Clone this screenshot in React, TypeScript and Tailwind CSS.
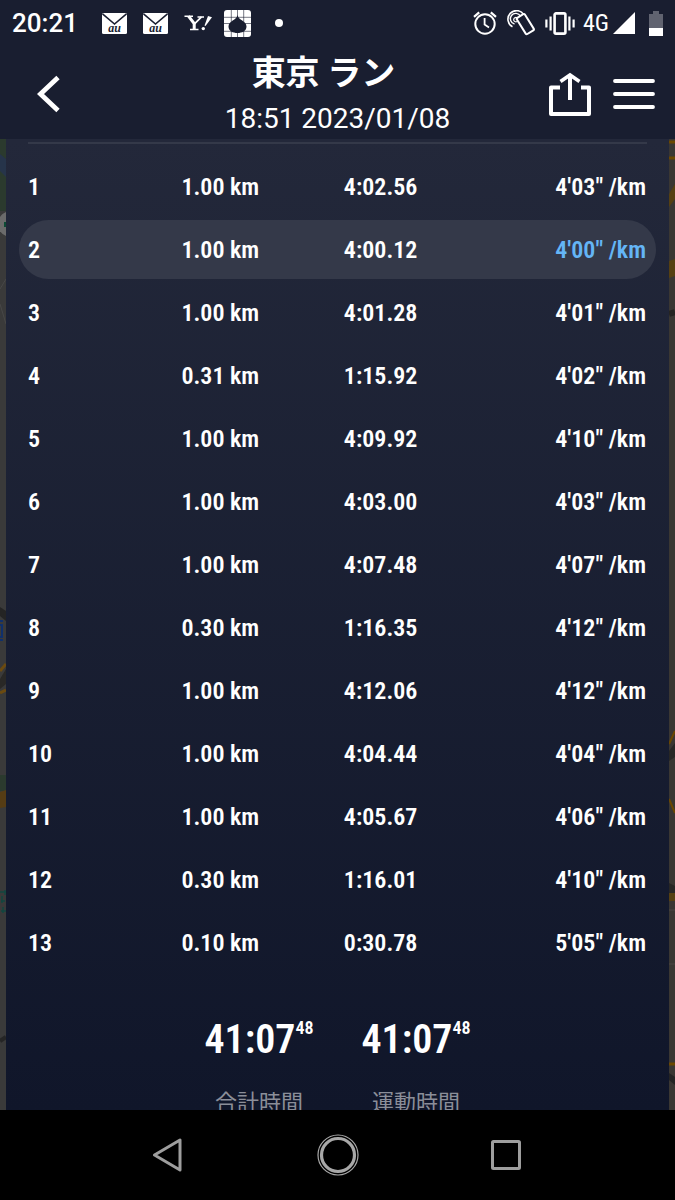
import React from 'react';

interface Lap {
  distance: string;
  time: string;
  pace: string;
}

const laps: Lap[] = [
  { distance: '1.00', time: '4:02.56', pace: `4'03"` },
  { distance: '1.00', time: '4:00.12', pace: `4'00"` },
  { distance: '1.00', time: '4:01.28', pace: `4'01"` },
  { distance: '0.31', time: '1:15.92', pace: `4'02"` },
  { distance: '1.00', time: '4:09.92', pace: `4'10"` },
  { distance: '1.00', time: '4:03.00', pace: `4'03"` },
  { distance: '1.00', time: '4:07.48', pace: `4'07"` },
  { distance: '0.30', time: '1:16.35', pace: `4'12"` },
  { distance: '1.00', time: '4:12.06', pace: `4'12"` },
  { distance: '1.00', time: '4:04.44', pace: `4'04"` },
  { distance: '1.00', time: '4:05.67', pace: `4'06"` },
  { distance: '0.30', time: '1:16.01', pace: `4'10"` },
  { distance: '0.10', time: '0:30.78', pace: `5'05"` },
];

const FASTEST_LAP = 1;

const totals = [
  { label: '合計時間', value: '41:07', fraction: '48' },
  { label: '運動時間', value: '41:07', fraction: '48' },
];

function MailIcon() {
  return (
    <svg width="25" height="21" viewBox="0 0 25 21">
      <rect width="25" height="21" rx="1.5" fill="#fff" />
      <path d="M0.5 0.8 12.5 11 24.5 0.8" fill="none" stroke="#191e30" strokeWidth="1.6" />
      <text x="12.5" y="18.6" textAnchor="middle" fontSize="12" fontWeight="700" fontStyle="italic" fontFamily="Liberation Serif, serif" fill="#191e30">
        au
      </text>
    </svg>
  );
}

function YahooIcon() {
  return (
    <svg width="28" height="18" viewBox="0 0 28 18">
      <g fill="none" stroke="#fff">
        <path d="M0.5 2.2H9M13.5 2.9H20M6 15.6H14.5" strokeWidth="1.5" />
        <path d="M4.5 2.2 10.2 9.6V15.6" strokeWidth="3" />
        <path d="M17.5 2.9 10.5 9.8" strokeWidth="1.7" />
      </g>
      <path d="M24 2 28 3.2 21.5 12 20.5 11.6Z" fill="#fff" />
      <circle cx="19.3" cy="14.6" r="1.7" fill="#fff" />
    </svg>
  );
}

function RainIcon() {
  return (
    <svg width="27" height="27" viewBox="0 0 27 27">
      <rect width="27" height="27" rx="3" fill="#fff" />
      <path d="M7.3 0V27M13.5 0V27M19.7 0V27M0 7.3H27M0 13.5H27M0 21.3H27" stroke="#191e30" strokeWidth="0.6" />
      <path d="M13.5 5C14.2 10.5 22.5 10.5 22.5 16.5C22.5 21 18 23 13.5 23C9 23 4.5 21 4.5 16.5C4.5 10.5 12.8 10.5 13.5 5Z" fill="#191e30" />
    </svg>
  );
}

function AlarmIcon() {
  return (
    <svg width="24" height="24" viewBox="0 0 24 24" fill="none" stroke="#fff">
      <circle cx="12" cy="13" r="9.7" strokeWidth="2" />
      <path d="M11.6 7V13.6L16 16.4" strokeWidth="1.8" />
      <path d="M1 5.8 6.2 1.4M17.8 1.4 23 5.8" strokeWidth="2.2" />
    </svg>
  );
}

function TapIcon() {
  return (
    <svg width="28" height="26" viewBox="0 0 28 26" fill="none" stroke="#fff">
      <path d="M5.5 16.8A8.6 8.6 0 1 1 16.8 4.6" strokeWidth="1.6" />
      <path d="M7.5 14A5.4 5.4 0 1 1 13.5 6.2" strokeWidth="1.4" />
      <path d="M10 11.5A2.2 2.2 0 1 1 10.8 8.5" strokeWidth="1.2" />
      <rect x="13.6" y="4.6" width="9.4" height="19" rx="1.2" transform="rotate(-32 18.3 14.1)" strokeWidth="2" />
    </svg>
  );
}

function VibrateIcon() {
  return (
    <svg width="30" height="23" viewBox="0 0 30 23" fill="none" stroke="#fff">
      <rect x="9.6" y="1.4" width="10.8" height="20.2" rx="1.4" strokeWidth="2.6" />
      <path d="M5.6 4.5V18.5M24.4 4.5V18.5" strokeWidth="2.2" />
      <path d="M1.4 7.5V15.5M28.6 7.5V15.5" strokeWidth="2.2" />
    </svg>
  );
}

function StatusBar() {
  return (
    <div className="flex h-[46px] items-center justify-between px-3">
      <div className="flex items-center">
        <span className="w-[90px] text-[26px] font-medium leading-none">20:21</span>
        <div className="flex items-center gap-4">
          <MailIcon />
          <MailIcon />
          <YahooIcon />
          <div className="-ml-1">
            <RainIcon />
          </div>
        </div>
        <span className="ml-6 size-2 rounded-full bg-white" />
      </div>
      <div className="flex items-center">
        <div className="flex items-center gap-[10px]">
          <AlarmIcon />
          <TapIcon />
          <VibrateIcon />
        </div>
        <span className="ml-2 font-['Roboto_Condensed',sans-serif] text-[24px] leading-none">4G</span>
        <svg className="ml-1" width="22" height="22" viewBox="0 0 22 22">
          <path d="M22 0V22H0Z" fill="#fff" />
        </svg>
        <svg className="ml-[14px]" width="14" height="25" viewBox="0 0 14 25">
          <path d="M4 0H10V3H14V25H0V3H4Z" fill="#606370" />
          <path d="M0 17H14V25H0Z" fill="#fff" />
        </svg>
      </div>
    </div>
  );
}

function Header() {
  return (
    <header className="grid h-[93px] grid-cols-[1fr_auto_1fr] items-center px-5">
      <button type="button" aria-label="戻る" className="justify-self-start pl-4">
        <svg width="26" height="38" viewBox="0 0 26 38">
          <path d="M22 2.5 4.5 19 22 35.5" fill="none" stroke="#fff" strokeWidth="4.8" />
        </svg>
      </button>
      <div className="flex flex-col items-center">
        <h1 className="pr-7 font-['Noto_Sans_CJK_JP',sans-serif] text-[34px] font-bold leading-[50px]">
          東京 ラン
        </h1>
        <p className="text-[28px] leading-[46px]">18:51 2023/01/08</p>
      </div>
      <div className="flex items-center gap-[22px] justify-self-end">
        <button type="button" aria-label="共有">
          <svg width="42" height="44" viewBox="0 0 42 44" fill="none" stroke="#fff" strokeWidth="4">
            <path d="M11 15.5H2V42H40V15.5H32" strokeLinejoin="round" />
            <path d="M21 28V3.5" />
            <path d="M11.5 9.5 21 3 30.5 9.5" strokeWidth="3.6" />
          </svg>
        </button>
        <button type="button" aria-label="メニュー">
          <svg width="42" height="32" viewBox="0 0 42 32" stroke="#fff" strokeWidth="3.8" strokeLinecap="round">
            <path d="M2 3H40M2 16H40M2 29H40" />
          </svg>
        </button>
      </div>
    </header>
  );
}

// Slivers of the dimmed map on both sides of the lap panel
function MapLeft() {
  return (
    <svg className="h-[971px] w-[6px] shrink-0" viewBox="0 0 6 971">
      <rect width="6" height="971" fill="#3a3a3a" />
      <rect width="6" height="72" fill="#2b3a2e" />
      <path d="M0 15 6 20V38L0 32Z" fill="#26344a" />
      <path d="M6 73A13 13 0 0 0 6 97Z" fill="#6b6b6b" />
      <rect x="4" y="83" width="2" height="5" fill="#0d4a35" />
      <path d="M0 150 6 140M0 165 6 185" stroke="#484848" />
      <path d="M0 468 6 472V482L0 477Z" fill="#242424" />
      <path d="M0 482H3M0 486H2V498H0M0 501H3" fill="none" stroke="#10306b" strokeWidth="2" />
      <path d="M0 532 6 525M0 554 6 551" stroke="#6b4a10" strokeWidth="3" />
      <path d="M0 540 6 530V545L0 550Z" fill="#292826" />
      <rect y="636" width="6" height="16" fill="#2b3a2e" />
      <path d="M0 653 6 651V668L0 669Z" fill="#553c14" />
      <path d="M0 753H6M2 757V764M5 751V756M1 762H5M3 768V774M1 772H6" stroke="#124740" strokeWidth="1.5" />
      <path d="M0 902 6 898" stroke="#252525" strokeWidth="4" />
    </svg>
  );
}

function MapRight() {
  return (
    <svg className="h-[971px] w-[6px] shrink-0" viewBox="0 0 6 971">
      <rect width="6" height="971" fill="#3a3733" />
      <path d="M0 3H6M0 19H6" stroke="#6b4700" strokeWidth="3" />
      <path d="M0 55 6 45V60L0 68ZM0 122 6 120V137L0 139Z" fill="#564012" />
      <path d="M0 175 6 173" stroke="#252422" strokeWidth="6" />
      <path d="M0 605 6 592M0 660 6 674" stroke="#6b4700" strokeWidth="2" />
      <path d="M0 612 6 604V618L0 622ZM0 744 6 747V754H0Z" fill="#282725" />
      <rect y="754" width="6" height="8" fill="#564012" />
      <path d="M0 771H6M0 825H6" stroke="#4a4744" />
      <path d="M0 925H6" stroke="#6b4700" strokeWidth="3" />
      <path d="M0 934 6 938V946L0 941Z" fill="#242424" />
    </svg>
  );
}

function LapTable() {
  return (
    <table className="w-full table-fixed border-separate border-spacing-x-0 border-spacing-y-1 text-left text-[24px] font-semibold leading-none">
      <colgroup>
        <col className="w-[25.5%]" />
        <col className="w-[25.5%]" />
        <col className="w-[24%]" />
        <col />
      </colgroup>
      <tbody>
        {laps.map((lap, i) => {
          const fastest = i === FASTEST_LAP;
          return (
            <tr key={i} className={fastest ? '[&>*]:bg-[#343949]' : ''}>
              <th scope="row" className="h-[59px] rounded-l-full p-0 pl-[9px] font-semibold">{i + 1}</th>
              <td className="p-0">{lap.distance} km</td>
              <td className="p-0">{lap.time}</td>
              <td className={`rounded-r-full p-0 pr-[10px] text-right ${fastest ? 'text-[#64b5f6]' : ''}`}>
                {lap.pace} /km
              </td>
            </tr>
          );
        })}
      </tbody>
    </table>
  );
}

function Totals() {
  return (
    <dl className="mt-8 flex justify-center">
      {totals.map((total) => (
        <div key={total.label} className="flex w-[157px] shrink-0 flex-col-reverse items-center">
          <dt className="font-['Noto_Sans_CJK_JP',sans-serif] text-[22px] leading-8 text-[#8b8e99]">
            {total.label}
          </dt>
          <dd className="mb-3 flex items-start font-semibold">
            <span className="text-[40px] leading-[64px]">{total.value}</span>
            <span className="pt-2 text-[18px] leading-6">{total.fraction}</span>
          </dd>
        </div>
      ))}
    </dl>
  );
}

function NavBar() {
  return (
    <nav className="h-[90px] shrink-0 bg-black">
      <div className="mx-auto grid h-full w-3/4 grid-cols-3 place-items-center">
        <button type="button" aria-label="Back">
          <svg width="32" height="36" viewBox="0 0 32 36" fill="none">
            <path d="M27 3V33L1.5 18Z" stroke="#9e9e9e" strokeWidth="3" strokeLinejoin="round" />
          </svg>
        </button>
        <button type="button" aria-label="Home">
          <svg width="42" height="42" viewBox="0 0 42 42" fill="none" stroke="#a8a8a8">
            <circle cx="21" cy="21" r="20" strokeWidth="1.2" />
            <circle cx="21" cy="21" r="16.5" strokeWidth="3.2" />
          </svg>
        </button>
        <button type="button" aria-label="Recents">
          <svg width="32" height="32" viewBox="0 0 32 32" fill="none">
            <rect x="2.5" y="2.5" width="27" height="27" rx="1" stroke="#9e9e9e" strokeWidth="3" />
          </svg>
        </button>
      </div>
    </nav>
  );
}

export default function App() {
  return (
    <div className="flex h-screen flex-col overflow-hidden bg-[#191e30] font-[Roboto,'Noto_Sans_CJK_JP',sans-serif] text-white">
      <StatusBar />
      <Header />
      <main className="flex min-h-0 flex-1 overflow-hidden bg-[#3a3a3a]">
        <MapLeft />
        <div className="min-w-0 flex-1 overflow-hidden bg-linear-to-b from-[#23283a] to-[#10162a] px-[13px] pt-[3px] font-['Roboto_Condensed','Liberation_Sans_Narrow',sans-serif]">
          <div className="mx-[9px] mb-[9px] h-[2px] bg-[#343949]" />
          <LapTable />
          <Totals />
        </div>
        <MapRight />
      </main>
      <NavBar />
    </div>
  );
}
